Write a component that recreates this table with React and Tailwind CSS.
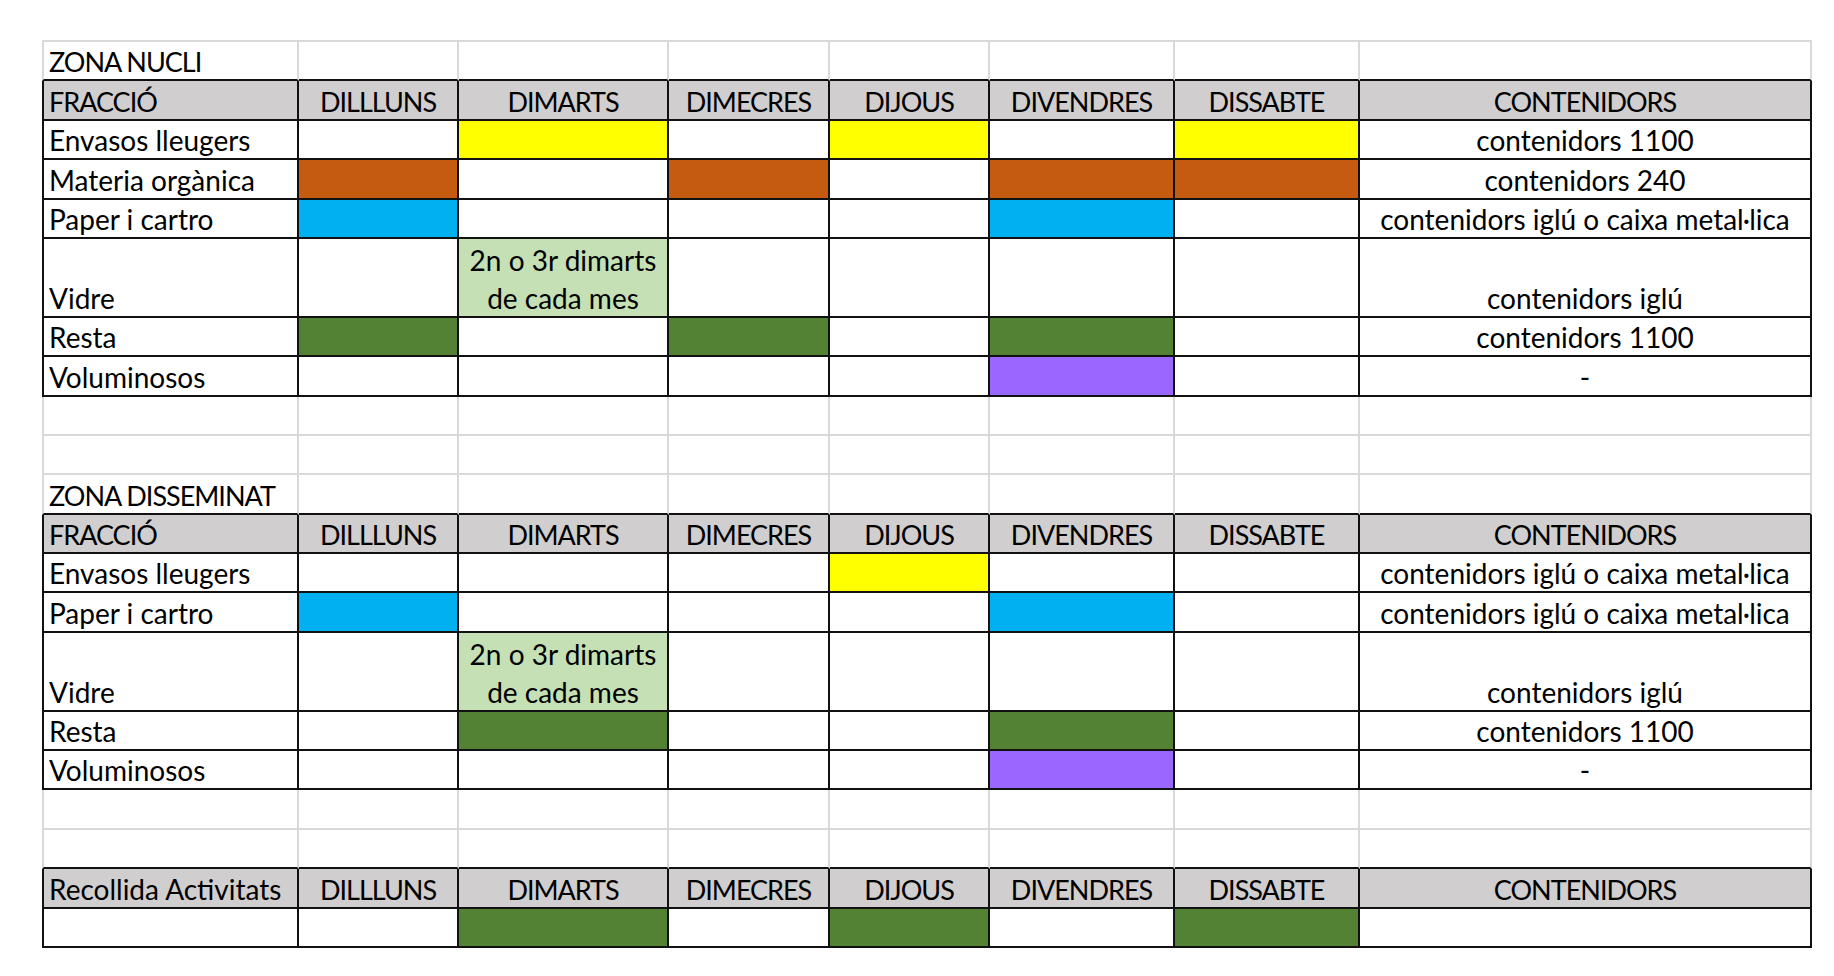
const W = ["w-[257px] border-l-2", "w-[160px]", "w-[210px]", "w-[161px]", "w-[160px]", "w-[185px]", "w-[185px]", "w-[452px]"];

const DAYS = ["DILLLUNS", "DIMARTS", "DIMECRES", "DIJOUS", "DIVENDRES", "DISSABTE"];

const FILL = {
  Y: "bg-[#ffff00]",
  O: "bg-[#c55a11]",
  B: "bg-[#00b0f0]",
  G: "bg-[#548235]",
  L: "bg-[#c5e0b4]",
  P: "bg-[#9966ff]",
  H: "bg-[#d0cece]",
};

function Cell({ i, dark, bottomDark, fill, align = "left", tall, children }) {
  const border = dark
    ? "border-r-[#111] border-l-[#111]"
    : "border-r-[#d9d9d9] border-l-[#d9d9d9]";
  const bottom = bottomDark ? "border-b-[#111]" : "border-b-[#d9d9d9]";
  return (
    <div
      className={`${W[i]} shrink-0 border-r-2 border-b-2 ${border} ${bottom} ${
        fill ? FILL[fill] : "bg-white"
      } flex flex-col justify-end ${
        align === "center" ? "items-center text-center px-[3px]" : "items-start pl-[5px] pr-[3px]"
      } overflow-hidden whitespace-nowrap ${tall ? "h-[78.8px]" : "h-[39.4px]"}`}
    >
      {children}
    </div>
  );
}

function Txt({ caps, children }) {
  return (
    <span
      className={`block pb-[4px] text-black ${
        caps ? "text-[27px] leading-[27px] tracking-[-1px]" : "text-[28px] leading-[28px]"
      }`}
    >
      {children}
    </span>
  );
}

function GridRow({ label, bottomDark, first }) {
  return (
    <div className={`flex w-fit ${first ? "border-t-2 border-t-[#d9d9d9] h-[41.4px]" : ""}`}>
      {W.map((_, i) => (
        <Cell key={i} i={i} bottomDark={bottomDark}>
          {i === 0 && label ? <Txt caps>{label}</Txt> : null}
        </Cell>
      ))}
    </div>
  );
}

function HeaderRow({ label, caps }) {
  return (
    <div className="flex w-fit">
      <Cell i={0} dark bottomDark fill="H">
        <Txt caps={caps}>{label}</Txt>
      </Cell>
      {DAYS.map((d, k) => (
        <Cell key={d} i={k + 1} dark bottomDark fill="H" align="center">
          <Txt caps>{d}</Txt>
        </Cell>
      ))}
      <Cell i={7} dark bottomDark fill="H" align="center">
        <Txt caps>CONTENIDORS</Txt>
      </Cell>
    </div>
  );
}

function DataRow({ label, days, cont, tall }) {
  return (
    <div className="flex w-fit">
      <Cell i={0} dark bottomDark tall={tall}>
        <Txt>{label}</Txt>
      </Cell>
      {days.map((d, k) => (
        <Cell key={k} i={k + 1} dark bottomDark tall={tall} fill={d === "V" ? "L" : d} align="center">
          {d === "V" ? (
            <>
              <span className="h-[39.4px] flex items-end">
                <Txt>2n o 3r dimarts</Txt>
              </span>
              <span className="h-[37.4px] flex items-end">
                <Txt>de cada mes</Txt>
              </span>
            </>
          ) : null}
        </Cell>
      ))}
      <Cell i={7} dark bottomDark tall={tall} align="center">
        {cont ? <Txt>{cont}</Txt> : null}
      </Cell>
    </div>
  );
}

const NUCLI = [
  { label: "Envasos lleugers", days: [null, "Y", null, "Y", null, "Y"], cont: "contenidors 1100" },
  { label: "Materia orgànica", days: ["O", null, "O", null, "O", "O"], cont: "contenidors 240" },
  { label: "Paper i cartro", days: ["B", null, null, null, "B", null], cont: "contenidors iglú o caixa metal·lica" },
  { label: "Vidre", days: [null, "V", null, null, null, null], cont: "contenidors iglú", tall: true },
  { label: "Resta", days: ["G", null, "G", null, "G", null], cont: "contenidors 1100" },
  { label: "Voluminosos", days: [null, null, null, null, "P", null], cont: "-" },
];

const DISSEMINAT = [
  { label: "Envasos lleugers", days: [null, null, null, "Y", null, null], cont: "contenidors iglú o caixa metal·lica" },
  { label: "Paper i cartro", days: ["B", null, null, null, "B", null], cont: "contenidors iglú o caixa metal·lica" },
  { label: "Vidre", days: [null, "V", null, null, null, null], cont: "contenidors iglú", tall: true },
  { label: "Resta", days: [null, "G", null, null, "G", null], cont: "contenidors 1100" },
  { label: "Voluminosos", days: [null, null, null, null, "P", null], cont: "-" },
];

export default function App() {
  return (
    <div
      className="w-[1834px] h-[976px] bg-white overflow-hidden pt-[40px] pl-[42px]"
      style={{ fontFamily: "Lato, 'Liberation Sans', sans-serif" }}
    >
      <GridRow first label="ZONA NUCLI" bottomDark />
      <HeaderRow label="FRACCIÓ" caps />
      {NUCLI.map((r) => (
        <DataRow key={r.label} {...r} />
      ))}
      <GridRow />
      <GridRow />
      <GridRow label="ZONA DISSEMINAT" bottomDark />
      <HeaderRow label="FRACCIÓ" caps />
      {DISSEMINAT.map((r) => (
        <DataRow key={r.label} {...r} />
      ))}
      <GridRow />
      <GridRow bottomDark />
      <HeaderRow label="Recollida Activitats" />
      <DataRow label="" days={[null, "G", null, "G", null, "G"]} cont="" />
    </div>
  );
}
